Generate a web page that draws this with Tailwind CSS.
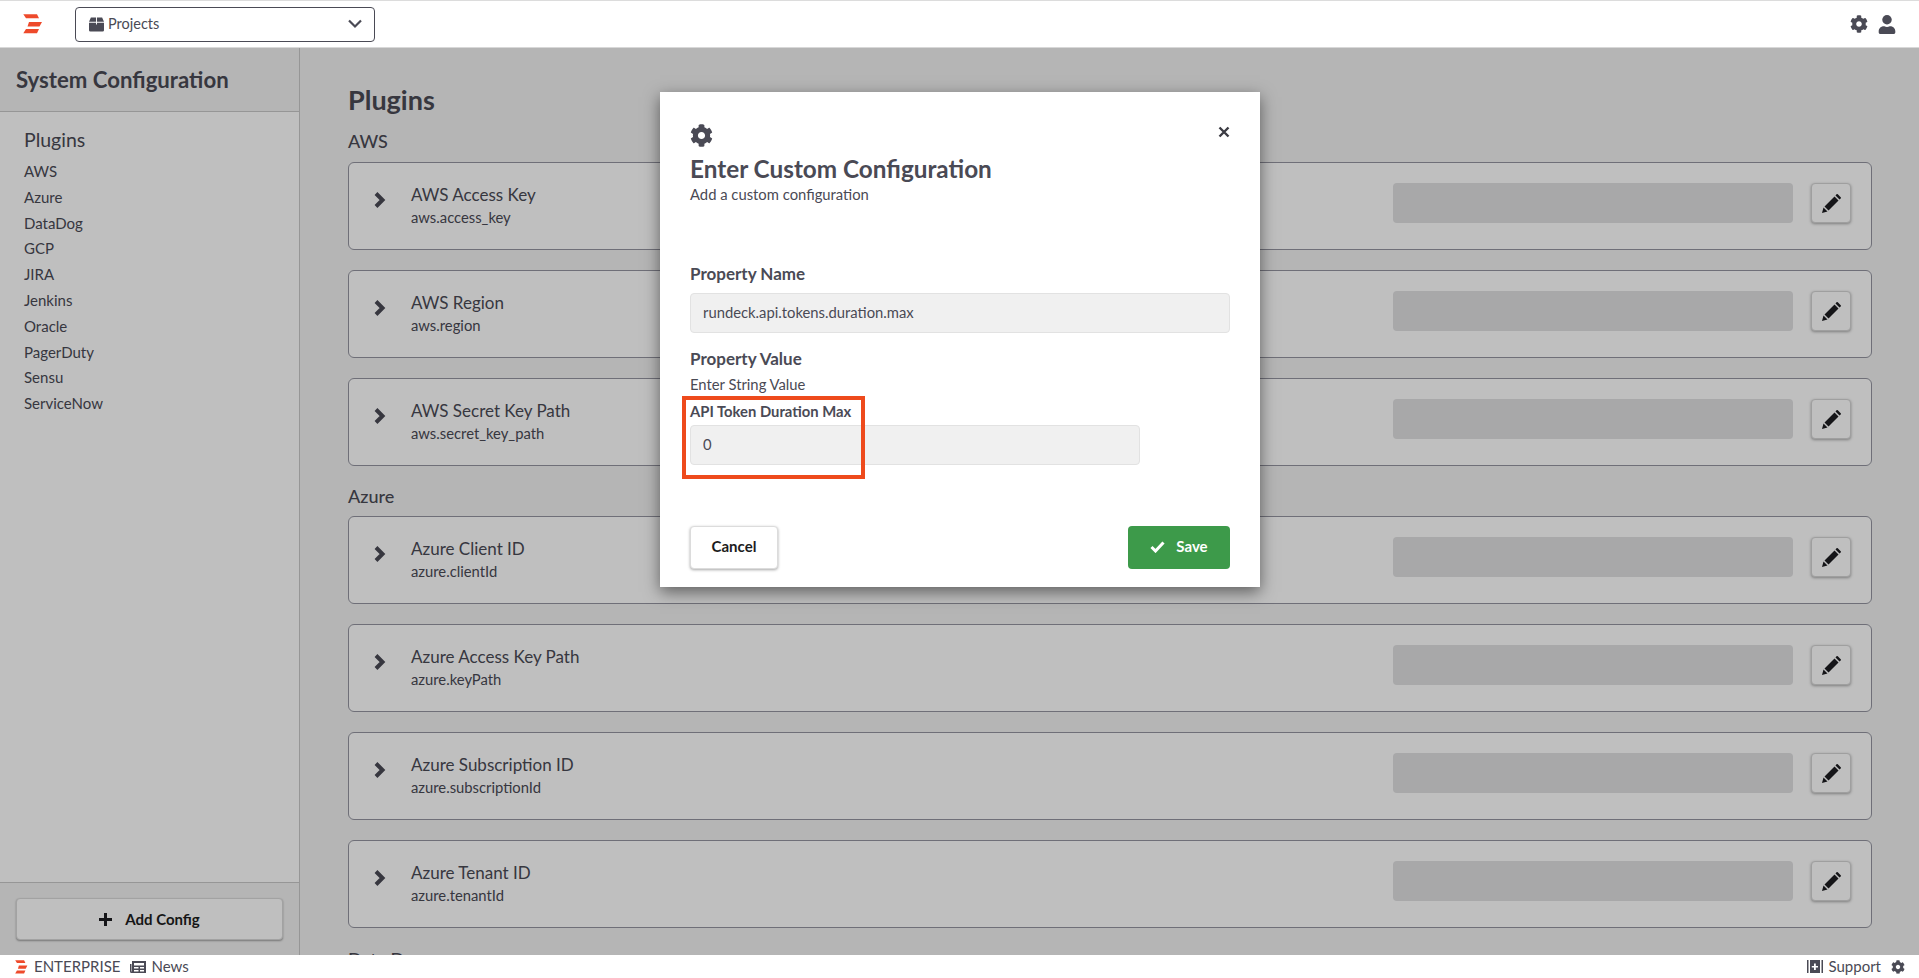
<!DOCTYPE html>
<html lang="en">
<head>
  <meta charset="UTF-8" />
  <title>System Configuration</title>
  <script src="https://cdn.jsdelivr.net/npm/@tailwindcss/browser@4"></script>
</head>
<body class="h-screen overflow-hidden flex flex-col bg-white text-[#4a4a55] font-['Lato','Liberation_Sans',sans-serif]">

  <!-- Top nav -->
  <header class="h-[48px] shrink-0 border-t border-t-[#dcdcdc] border-b border-b-[#d8d8d8] flex items-center pl-[23px] pr-[23px]">
    <svg class="w-[20px] h-[20px]" viewBox="0 0 20 20" fill="#ee4a2b"><path d="M.3.3H14l2 4H3zM6 8h13l-2.500 4.500H4.500zM3 15h13l-2 4.300H.3z"/></svg>
    <div class="ml-[32px] w-[300px] h-[35px] border border-[#4a4a55] rounded-[4px] flex items-center pl-[13px] pr-[12px]">
      <svg class="w-[15px] h-[15px] mr-[4px]" viewBox="0 0 16 16" fill="#4a4a55"><path d="M0 5l2-4.500h5.500V5zM8.500.5H14L16 5H8.500zM0 6h7.500v2h1V6H16v8a1.500 1.500 0 0 1-1.500 1.500h-13A1.500 1.500 0 0 1 0 14z"/></svg>
      <span class="text-[14.500px]">Projects</span>
      <svg class="ml-auto w-[14px] h-[10px]" viewBox="0 0 14 10" fill="none" stroke="#4a4a55" stroke-width="2.200"><path d="M1 1.500l6 6 6-6"/></svg>
    </div>
    <svg class="ml-auto w-[18px] h-[18px]" viewBox="0 0 512 512" fill="#4a4a55"><path d="M487.400 315.700l-42.600-24.600c4.300-23.200 4.300-47 0-70.200l42.600-24.600c4.900-2.800 7.100-8.600 5.500-14-11.100-35.600-30-67.800-54.700-94.600-3.800-4.100-10-5.100-14.800-2.300L380.800 110c-17.900-15.400-38.500-27.300-60.800-35.100V25.800c0-5.600-3.900-10.500-9.400-11.700-36.700-8.200-74.300-7.800-109.200 0-5.500 1.200-9.400 6.100-9.400 11.700V75c-22.200 7.900-42.800 19.800-60.800 35.100L88.700 85.500c-4.900-2.800-11-1.900-14.800 2.300-24.700 26.700-43.600 58.900-54.700 94.600-1.700 5.400.6 11.200 5.500 14L67.300 221c-4.300 23.200-4.300 47 0 70.200l-42.600 24.600c-4.900 2.800-7.100 8.600-5.500 14 11.100 35.600 30 67.800 54.700 94.600 3.800 4.100 10 5.100 14.800 2.300l42.600-24.600c17.900 15.400 38.500 27.300 60.800 35.100v49.200c0 5.600 3.900 10.500 9.400 11.700 36.700 8.200 74.300 7.800 109.200 0 5.500-1.200 9.400-6.100 9.400-11.700v-49.200c22.200-7.900 42.800-19.800 60.800-35.100l42.600 24.600c4.900 2.800 11 1.900 14.800-2.300 24.700-26.700 43.600-58.900 54.700-94.600 1.500-5.500-.7-11.300-5.600-14.100zM256 336c-44.100 0-80-35.900-80-80s35.900-80 80-80 80 35.900 80 80-35.900 80-80 80z"/></svg>
    <svg class="ml-[10px] w-[18px] h-[19px]" viewBox="0 0 448 512" fill="#4a4a55"><circle cx="224" cy="128" r="128"/><path d="M313.600 304h-16.700a174 174 0 0 1-145.800 0h-16.700C60.200 304 0 364.200 0 438.400V464c0 26.500 21.500 48 48 48h352c26.500 0 48-21.500 48-48v-25.600c0-74.200-60.200-134.400-134.400-134.400z"/></svg>
  </header>

  <!-- Body -->
  <div class="flex-1 min-h-0 flex overflow-hidden bg-[#f2f2f2]">
    <aside class="w-[300px] shrink-0 flex flex-col border-r border-[#c9c9c9] bg-white">
      <div class="h-[64px] shrink-0 bg-[#f2f2f2] border-b border-[#c9c9c9] flex items-center pl-[16px] text-[22.200px] font-bold text-[#4a4a55]">System Configuration</div>
      <nav class="flex-1 pl-[24px] pt-[15px]">
        <div class="text-[19.500px] leading-[26px] mb-[6px]">Plugins</div>
        <ul class="text-[15px] leading-[25.800px]">
          <li>AWS</li><li>Azure</li><li>DataDog</li><li>GCP</li><li>JIRA</li><li>Jenkins</li><li>Oracle</li><li>PagerDuty</li><li>Sensu</li><li>ServiceNow</li>
        </ul>
      </nav>
      <div class="h-[73px] shrink-0 bg-[#f2f2f2] border-t border-[#c9c9c9] px-[16px] pt-[15px]">
        <button class="w-[267px] h-[42px] bg-white rounded-[4px] border border-[#d8d8d8] shadow-[0_1px_2px_rgba(0,0,0,0.35)] flex items-center justify-center text-[15px] font-bold text-[#1c1c20]">
          <svg class="w-[13px] h-[13px] mr-[13px]" viewBox="0 0 13 13" fill="#1c1c20"><path d="M5 0h3v5h5v3H8v5H5V8H0V5h5z"/></svg>Add Config
        </button>
      </div>
    </aside>

    <main class="flex-1 min-w-0 pl-[48px] pr-[47px] pt-[34px]">
      <h1 class="text-[27px] leading-[36px] font-bold">Plugins</h1>
      <h2 class="text-[18px] leading-[24px] mt-[11px] mb-[9px] font-medium">AWS</h2>
      <div id="aws" class="flex flex-col gap-[20px]"></div>
      <h2 class="text-[18px] leading-[24px] mt-[18px] mb-[8px] font-medium">Azure</h2>
      <div id="azure" class="flex flex-col gap-[20px]"></div>
      <h2 class="text-[18px] leading-[24px] mt-[19px] font-medium">Data Dog</h2>
    </main>
  </div>

  <!-- Footer -->
  <footer class="h-[23px] shrink-0 flex items-center pl-[15px] pr-[14px] text-[15px] text-[#4a4a55]">
    <svg class="w-[13px] h-[14px] mr-[6px]" viewBox="0 0 20 20" fill="#ee4a2b" preserveAspectRatio="none"><path d="M.3.3H14l2 4H3zM6 8h13l-2.500 4.500H4.500zM3 15h13l-2 4.300H.3z"/></svg>
    <span>ENTERPRISE</span>
    <svg class="ml-[10px] mr-[5px] w-[16px] h-[12px]" viewBox="0 0 16 12" fill="#4a4a55"><path fill-rule="evenodd" d="M2 0h14v12H1.500A1.500 1.500 0 0 1 0 10.500V3h1.500v7.500H2zM4 2v2.500h10V2zM4 6v1.500h4.500V6zm6 0v1.500h4V6zM4 9v1.500h4.500V9zm6 0v1.500h4V9z"/></svg>
    <span>News</span>
    <svg class="ml-auto mr-[5px] w-[16px] h-[13px]" viewBox="0 0 16 13" fill="#4a4a55"><path fill-rule="evenodd" d="M0 0h1.500v13H0zM14.500 0H16v13h-1.500zM3 0h10v13H3zM7 3.500V6H4.800v1.500H7V10h1.800V7.500H11V6H8.800V3.500z"/></svg>
    <span>Support</span>
    <svg class="ml-[10px] w-[14px] h-[14px]" viewBox="0 0 512 512" fill="#4a4a55"><path d="M487.400 315.700l-42.600-24.600c4.300-23.200 4.300-47 0-70.200l42.600-24.600c4.900-2.800 7.100-8.600 5.500-14-11.100-35.600-30-67.800-54.700-94.600-3.800-4.100-10-5.100-14.800-2.300L380.800 110c-17.900-15.400-38.500-27.300-60.800-35.100V25.800c0-5.600-3.900-10.500-9.400-11.700-36.700-8.200-74.300-7.800-109.200 0-5.500 1.200-9.400 6.100-9.400 11.700V75c-22.200 7.900-42.800 19.800-60.800 35.100L88.700 85.500c-4.900-2.800-11-1.900-14.800 2.300-24.700 26.700-43.600 58.900-54.700 94.600-1.700 5.400.6 11.200 5.500 14L67.300 221c-4.300 23.200-4.300 47 0 70.200l-42.600 24.600c-4.900 2.800-7.100 8.600-5.500 14 11.100 35.600 30 67.800 54.700 94.600 3.800 4.100 10 5.100 14.800 2.300l42.600-24.600c17.900 15.400 38.500 27.300 60.800 35.100v49.200c0 5.600 3.900 10.500 9.400 11.700 36.700 8.200 74.300 7.800 109.200 0 5.500-1.200 9.400-6.100 9.400-11.700v-49.200c22.200-7.900 42.800-19.800 60.800-35.100l42.600 24.600c4.900 2.800 11 1.900 14.800-2.300 24.700-26.700 43.600-58.900 54.700-94.600 1.500-5.500-.7-11.300-5.600-14.100zM256 336c-44.100 0-80-35.900-80-80s35.900-80 80-80 80 35.900 80 80-35.900 80-80 80z"/></svg>
  </footer>

  <!-- Modal backdrop -->
  <div class="absolute left-0 right-0 top-[48px] bottom-[23px] bg-black/25"></div>

  <!-- Modal -->
  <div class="absolute left-[660px] top-[92px] w-[600px] h-[495px] bg-white shadow-[0_5px_15px_rgba(0,0,0,0.5)] px-[30px] pt-[32px]">
    <button class="absolute right-[30px] top-[34px] w-[12px] h-[12px]" aria-label="Close">
      <svg class="w-[12px] h-[12px]" viewBox="0 0 12 12" stroke="#3c3c44" stroke-width="2.400"><path d="M1.500 1.500l9 9M10.500 1.500l-9 9"/></svg>
    </button>
    <svg class="w-[23px] h-[23px]" viewBox="0 0 512 512" fill="#4a4a55"><path d="M487.400 315.700l-42.600-24.600c4.300-23.200 4.300-47 0-70.200l42.600-24.600c4.900-2.800 7.100-8.600 5.500-14-11.100-35.600-30-67.800-54.700-94.600-3.800-4.100-10-5.100-14.800-2.300L380.800 110c-17.900-15.400-38.500-27.300-60.800-35.100V25.800c0-5.600-3.900-10.500-9.400-11.700-36.700-8.200-74.300-7.800-109.200 0-5.500 1.200-9.400 6.100-9.400 11.700V75c-22.200 7.900-42.800 19.800-60.800 35.100L88.700 85.500c-4.900-2.800-11-1.900-14.800 2.300-24.700 26.700-43.600 58.900-54.700 94.600-1.700 5.400.6 11.200 5.500 14L67.300 221c-4.300 23.200-4.300 47 0 70.200l-42.600 24.600c-4.900 2.800-7.100 8.600-5.500 14 11.100 35.600 30 67.800 54.700 94.600 3.800 4.100 10 5.100 14.800 2.300l42.600-24.600c17.900 15.400 38.500 27.300 60.800 35.100v49.200c0 5.600 3.900 10.500 9.400 11.700 36.700 8.200 74.300 7.800 109.200 0 5.500-1.200 9.400-6.100 9.400-11.700v-49.200c22.200-7.900 42.800-19.800 60.800-35.100l42.600 24.600c4.900 2.800 11 1.900 14.800-2.300 24.700-26.700 43.600-58.900 54.700-94.600 1.500-5.500-.7-11.300-5.600-14.100zM256 336c-44.100 0-80-35.900-80-80s35.900-80 80-80 80 35.900 80 80-35.900 80-80 80z"/></svg>
    <h3 class="text-[24.300px] leading-[32px] font-bold mt-[6px]">Enter Custom Configuration</h3>
    <p class="text-[14.800px] leading-[20px] mt-[-1px]">Add a custom configuration</p>

    <label class="block text-[17px] leading-[22px] font-bold mt-[59px]">Property Name</label>
    <input class="block w-[540px] h-[40px] mt-[8px] px-[12px] pb-[2px] bg-[#f0f0f0] border border-[#e2e2e2] rounded-[4px] text-[14.800px] text-[#4a4a55]" value="rundeck.api.tokens.duration.max" readonly />

    <label class="block text-[17px] leading-[22px] font-bold mt-[15px]">Property Value</label>
    <p class="text-[14.800px] leading-[20px] mt-[4px]">Enter String Value</p>
    <div class="relative mt-[7px]">
      <label class="block text-[14.800px] leading-[20px] font-bold">API Token Duration Max</label>
      <input class="block w-[450px] h-[40px] mt-[4px] px-[12px] pb-[2px] bg-[#f0f0f0] border border-[#e2e2e2] rounded-[4px] text-[14.800px] text-[#4a4a55]" value="0" readonly />
      <div class="absolute left-[-8px] top-[-5px] w-[183px] h-[83px] border-[4px] border-[#ee4a1c]"></div>
    </div>

    <div class="flex justify-between mt-[61px]">
      <button class="w-[88px] h-[43px] pb-[2px] bg-white border border-[#dcdcdc] rounded-[4px] shadow-[0_1px_3px_rgba(0,0,0,0.35)] text-[15px] font-bold text-[#1c1c20]">Cancel</button>
      <button class="w-[102px] h-[43px] pb-[2px] bg-[#3d9a4a] rounded-[4px] text-[15px] font-bold text-white flex items-center justify-center">
        <svg class="w-[15px] h-[12px] mr-[11px]" viewBox="0 0 15 12" fill="none" stroke="#fff" stroke-width="3"><path d="M1.500 6l4 4 8-8.500"/></svg>Save
      </button>
    </div>
  </div>

  <script>
    const awsRows = [
      ["AWS Access Key", "aws.access_key"],
      ["AWS Region", "aws.region"],
      ["AWS Secret Key Path", "aws.secret_key_path"],
    ];
    const azureRows = [
      ["Azure Client ID", "azure.clientId"],
      ["Azure Access Key Path", "azure.keyPath"],
      ["Azure Subscription ID", "azure.subscriptionId"],
      ["Azure Tenant ID", "azure.tenantId"],
    ];

    function rowHtml([title, key]) {
      return `
        <div class="h-[88px] shrink-0 bg-white border border-[#9495a0] rounded-[6px] flex items-center pl-[25px] pr-[20px] pb-[6px]">
          <svg class="w-[12px] h-[16px] mr-[25px] mb-[6px]" viewBox="0 0 12 16" fill="none" stroke="#4a4a55" stroke-width="4"><path d="M2 1.500L8.500 8 2 14.500"/></svg>
          <div class="mt-[4px]">
            <div class="text-[17px] leading-[24px]">${title}</div>
            <div class="text-[14.800px] leading-[20px]">${key}</div>
          </div>
          <div class="ml-auto w-[400px] h-[40px] bg-[#e0e0e2] rounded-[4px]"></div>
          <button class="ml-[18px] w-[40px] h-[40px] bg-white border border-[#d4d4d4] rounded-[4px] shadow-[0_1px_3px_rgba(0,0,0,0.35)] flex items-center justify-center">
            <svg class="w-[19px] h-[19px]" viewBox="0 0 19 19" fill="#1c1c20"><path d="M0 19l1.500-5.500 4 4zM2.500 12.500L12.500 2.500l4 4-10 10zM13.500 1.500l1-1.200a1 1 0 0 1 1.300 0l2.900 2.900a1 1 0 0 1 0 1.300l-1.200 1z"/></svg>
          </button>
        </div>`;
    }

    document.getElementById("aws").innerHTML = awsRows.map(rowHtml).join("");
    document.getElementById("azure").innerHTML = azureRows.map(rowHtml).join("");
  </script>
</body>
</html>
